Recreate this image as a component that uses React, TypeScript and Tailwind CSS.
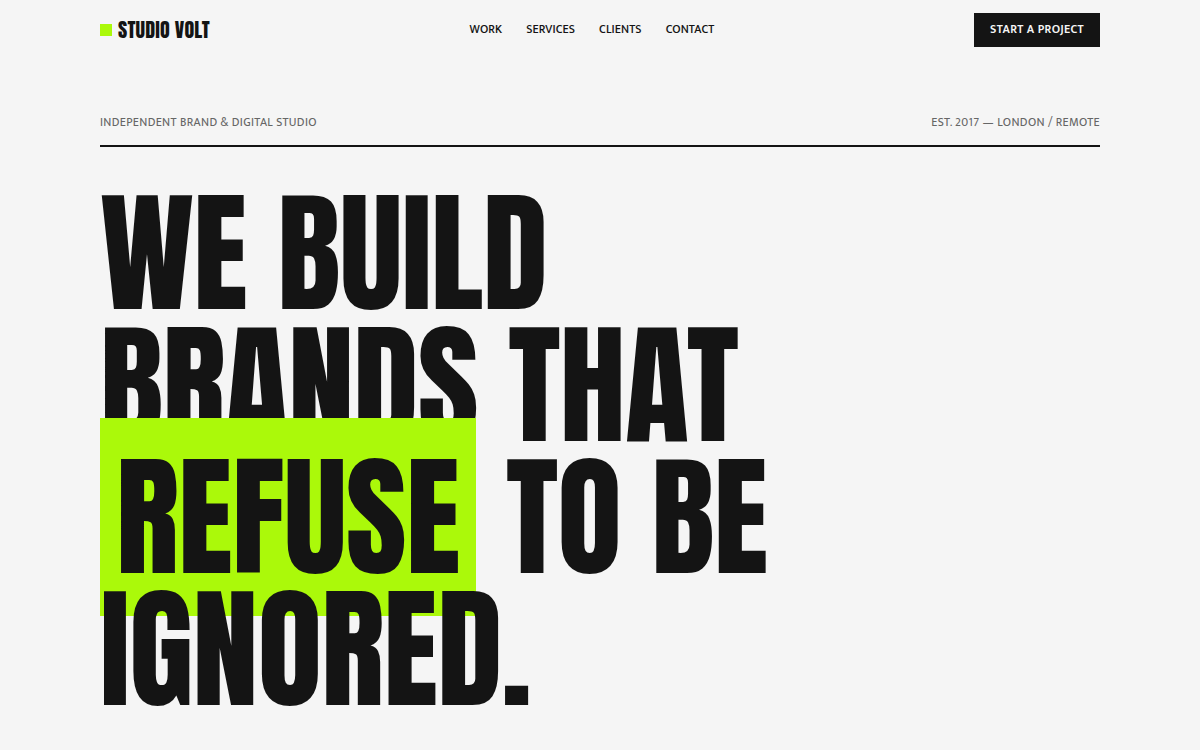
const links = ["Work", "Services", "Clients", "Contact"];

function Header() {
  return (
    <header className="mx-auto flex h-[60px] max-w-[1000px] items-center justify-between">
      <a href="#top" className="flex items-center gap-1.5 font-['Anton',sans-serif] text-xl leading-6 tracking-[0.01em] uppercase">
        <span className="size-3 bg-[#abf90a]" />
        Studio Volt
      </a>
      <nav className="flex gap-6 pb-0.5 text-xs font-medium tracking-[0.01em] uppercase">
        {links.map((label) => (
          <a key={label} href={`#${label.toLowerCase()}`}>
            {label}
          </a>
        ))}
      </nav>
      <button type="button" className="bg-[#141414] px-4 pt-[7px] pb-[9px] text-xs leading-[18px] font-semibold tracking-[0.03em] text-[#f5f5f5] uppercase">
        Start a project
      </button>
    </header>
  );
}

export default function App() {
  return (
    <div id="top" className="min-h-screen bg-[#f5f5f5] px-6 font-['Mukta',sans-serif] text-[#141414]">
      <Header />
      <main className="mx-auto max-w-[1000px] pt-[52px] pb-10">
        <div className="flex justify-between border-b-2 border-[#141414] pb-[13px] text-xs leading-5 tracking-[0.03em] text-[#666666] uppercase">
          <span>Independent Brand &amp; Digital Studio</span>
          <span>Est. 2017 — London / Remote</span>
        </div>
        <h1 className="pt-10 font-['Anton',sans-serif] text-[132px] leading-none font-normal tracking-[-0.005em] uppercase">
          We build
          <br />
          brands that
          <br />
          <span className="bg-[#abf90a] px-4">refuse</span> to be
          <br />
          ignored.
        </h1>
      </main>
    </div>
  );
}
